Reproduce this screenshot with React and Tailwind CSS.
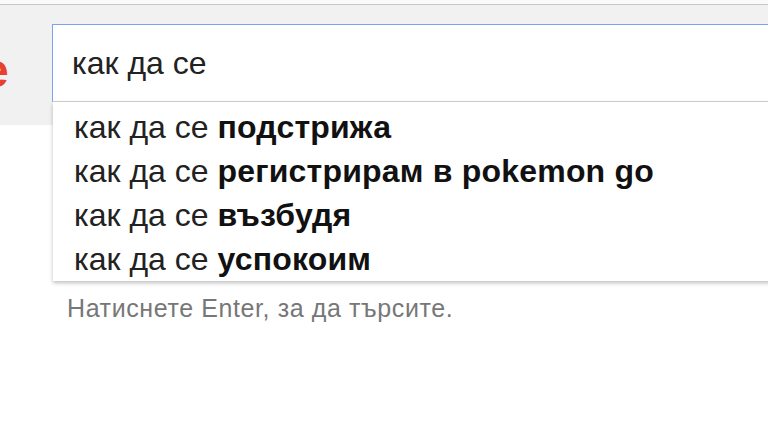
import React from "react";

const suggestions = [
  "подстрижа",
  "регистрирам в pokemon go",
  "възбудя",
  "успокоим",
];

function App() {
  const query = "как да се";

  return (
    <div className="relative h-[432px] w-full overflow-hidden bg-white font-['Liberation_Sans',Arial,sans-serif]">
      {/* top header strip */}
      <div className="h-[4px] bg-[#fafafa]" />
      <div className="flex h-[121px] border-t border-[#c8c8c8] bg-[#f1f1f1]">
        <div className="w-[52px] overflow-hidden">
          <span className="ml-[-18px] mt-[42px] block text-[48px] font-bold leading-none text-[#e8402f]">
            e
          </span>
        </div>
        <div className="mt-[19px] flex h-[78px] flex-1 items-center border-l border-t border-b border-l-[#7aa2f0] border-t-[#7aa2f0] border-b-[#d0d0d0] bg-white pl-[19px]">
          <span className="text-[32px] leading-none text-[#222]">{query}</span>
        </div>
      </div>

      {/* autocomplete dropdown */}
      <div className="absolute left-[53px] right-[-10px] top-[102px] h-[179px] bg-white pt-[3px] shadow-[0_2px_4px_rgba(0,0,0,0.25)]">
        {suggestions.map((s) => (
          <div
            key={s}
            className="flex h-[44px] items-center pl-[21px] text-[32px] text-[#222]"
          >
            <span>{query}&nbsp;</span>
            <b className="font-bold tracking-[0.2px] text-[#111]">{s}</b>
          </div>
        ))}
      </div>

      <p className="pl-[67px] pt-[170px] text-[25px] leading-[26px] tracking-[0.6px] text-[#777]">
        Натиснете Enter, за да търсите.
      </p>
    </div>
  );
}

export default App;
